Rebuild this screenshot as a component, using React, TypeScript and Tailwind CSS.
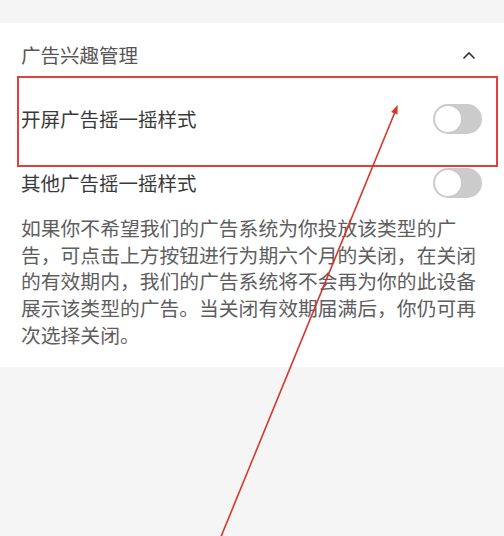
import { useState } from "react";

const Toggle = ({ on, onClick }: { on: boolean; onClick: () => void }) => (
  <button
    onClick={onClick}
    className={`relative w-[49px] h-[30px] rounded-full shrink-0 ${on ? "bg-[#e2403a]" : "bg-[#cbcbcb]"}`}
  >
    <span
      className={`absolute top-[2px] w-[26px] h-[26px] rounded-full bg-white ${on ? "left-[21px]" : "left-[2px]"}`}
    />
  </button>
);

const App = () => {
  const [splash, setSplash] = useState(false);
  const [other, setOther] = useState(false);

  return (
    <div
      className="relative w-[504px] h-[536px] overflow-hidden bg-[#f5f5f5]"
      style={{ fontFamily: '"Noto Sans CJK SC", "Noto Sans", sans-serif' }}
    >
      <div className="h-[23px]" />

      {/* Card */}
      <div className="bg-white pl-[21px] pr-[22px] pb-[18px]">
        {/* Header */}
        <div className="h-[64px] flex items-center justify-between">
          <span className="text-[19.5px] text-[#555]">广告兴趣管理</span>
          <svg width="14" height="9" viewBox="0 0 14 9" className="mr-[6px]">
            <path d="M1.5 7.5 L7 2 L12.5 7.5" fill="none" stroke="#333" strokeWidth="1.6" />
          </svg>
        </div>

        {/* Rows */}
        <div className="h-[64px] flex items-center justify-between">
          <span className="text-[19.5px] text-[#3a3a3a]">开屏广告摇一摇样式</span>
          <Toggle on={splash} onClick={() => setSplash(!splash)} />
        </div>
        <div className="h-[64px] flex items-center justify-between">
          <span className="text-[19.5px] text-[#3a3a3a]">其他广告摇一摇样式</span>
          <Toggle on={other} onClick={() => setOther(!other)} />
        </div>

        {/* Description */}
        <p className="text-[19.8px] leading-[26.7px] text-[#5e5e5e]">
          如果你不希望我们的广告系统为你投放该类型的广告，可点击上方按钮进行为期六个月的关闭，在关闭的有效期内，我们的广告系统将不会再为你的此设备展示该类型的广告。当关闭有效期届满后，你仍可再次选择关闭。
        </p>
      </div>

      {/* Annotation box */}
      <div className="absolute left-[17px] top-[76px] w-[481px] h-[91px] border-2 border-[#e2403a] pointer-events-none" />

      {/* Annotation arrow */}
      <svg className="absolute inset-0 pointer-events-none" width="504" height="536" viewBox="0 0 504 536">
        <line x1="218" y1="544" x2="395" y2="112" stroke="#d9352c" strokeWidth="1.6" />
        <polygon points="397.7,105 397.5,114.6 391.1,112" fill="#d9352c" />
      </svg>
    </div>
  );
};

export default App;
